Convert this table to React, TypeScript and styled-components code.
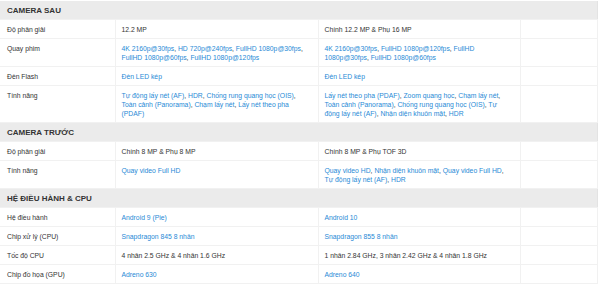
import React from 'react';
import styled, { createGlobalStyle } from 'styled-components';

const GlobalStyle = createGlobalStyle`
    html, body {
        margin: 0;
        padding: 0;
        background: #fff;
    }
    body {
        font-family: "Liberation Sans", Arial, sans-serif;
    }
`;

type Cell = { text: string; link?: boolean }[];
type Row = { label: string; a: Cell; b: Cell };
type Section = { title: string; rows: Row[] };

const plain = (t: string): Cell => [{ text: t }];
const links = (...items: string[]): Cell => items.map((t) => ({ text: t, link: true }));

const sections: Section[] = [
    {
        title: 'CAMERA SAU',
        rows: [
            { label: 'Độ phân giải', a: plain('12.2 MP'), b: plain('Chính 12.2 MP & Phụ 16 MP') },
            {
                label: 'Quay phim',
                a: links('4K 2160p@30fps', 'HD 720p@240fps', 'FullHD 1080p@30fps', 'FullHD 1080p@60fps', 'FullHD 1080p@120fps'),
                b: links('4K 2160p@30fps', 'FullHD 1080p@120fps', 'FullHD 1080p@30fps', 'FullHD 1080p@60fps'),
            },
            { label: 'Đèn Flash', a: links('Đèn LED kép'), b: links('Đèn LED kép') },
            {
                label: 'Tính năng',
                a: links('Tự động lấy nét (AF)', 'HDR', 'Chống rung quang học (OIS)', 'Toàn cảnh (Panorama)', 'Chạm lấy nét', 'Lấy nét theo pha (PDAF)'),
                b: links('Lấy nét theo pha (PDAF)', 'Zoom quang học', 'Chạm lấy nét', 'Toàn cảnh (Panorama)', 'Chống rung quang học (OIS)', 'Tự động lấy nét (AF)', 'Nhận diện khuôn mặt', 'HDR'),
            },
        ],
    },
    {
        title: 'CAMERA TRƯỚC',
        rows: [
            { label: 'Độ phân giải', a: plain('Chính 8 MP & Phụ 8 MP'), b: plain('Chính 8 MP & Phụ TOF 3D') },
            {
                label: 'Tính năng',
                a: links('Quay video Full HD'),
                b: links('Quay video HD', 'Nhận diện khuôn mặt', 'Quay video Full HD', 'Tự động lấy nét (AF)', 'HDR'),
            },
        ],
    },
    {
        title: 'HỆ ĐIỀU HÀNH & CPU',
        rows: [
            { label: 'Hệ điều hành', a: links('Android 9 (Pie)'), b: links('Android 10') },
            { label: 'Chip xử lý (CPU)', a: links('Snapdragon 845 8 nhân'), b: links('Snapdragon 855 8 nhân') },
            { label: 'Tốc độ CPU', a: plain('4 nhân 2.5 GHz & 4 nhân 1.6 GHz'), b: plain('1 nhân 2.84 GHz, 3 nhân 2.42 GHz & 4 nhân 1.8 GHz') },
            { label: 'Chip đồ họa (GPU)', a: links('Adreno 630'), b: links('Adreno 640') },
        ],
    },
];

const Value = ({ cell }: { cell: Cell }) => (
    <>
        {cell.map((item, i) => (
            <React.Fragment key={i}>
                {item.link ? <SpecLink>{item.text}</SpecLink> : item.text}
                {i < cell.length - 1 && ', '}
            </React.Fragment>
        ))}
    </>
);

export default function App() {
    return (
        <>
            <GlobalStyle />
            <Wrapper>
                <SpecTable>
                    <colgroup>
                        <col style={{ width: 115 }} />
                        <col style={{ width: 203 }} />
                        <col style={{ width: 202 }} />
                        <col />
                    </colgroup>
                    {sections.map((section) => (
                        <tbody key={section.title}>
                            <tr>
                                <SectionTitle colSpan={4}>{section.title}</SectionTitle>
                            </tr>
                            {section.rows.map((row, i) => (
                                <tr key={i}>
                                    <LabelCell>{row.label}</LabelCell>
                                    <ValueCell><Value cell={row.a} /></ValueCell>
                                    <ValueCell><Value cell={row.b} /></ValueCell>
                                    <ValueCell />
                                </tr>
                            ))}
                        </tbody>
                    ))}
                </SpecTable>
            </Wrapper>
        </>
    );
}

const Wrapper = styled.div`
    padding-top: 1px;
    width: 598px;
`;

const SpecTable = styled.table`
    width: 598px;
    border-collapse: collapse;
    table-layout: fixed;
    border-right: 1px solid #e3e3e3;
    font-size: 6.8px;
    line-height: 9px;
    color: #333;
`;

const SectionTitle = styled.th`
    background: #ebebeb;
    text-align: left;
    font-size: 8px;
    font-weight: bold;
    color: #333;
    height: 18px;
    padding: 0 7px;
    border-bottom: 1px solid #f1f1f1;
`;

const LabelCell = styled.td`
    vertical-align: top;
    padding: 5px 6px 4px 7px;
    border-bottom: 1px solid #f1f1f1;
    border-right: 1px solid #f1f1f1;
`;

const ValueCell = styled.td`
    vertical-align: top;
    padding: 5px 6px 4px 6px;
    border-bottom: 1px solid #f1f1f1;
    border-right: 1px solid #f1f1f1;
`;

const SpecLink = styled.a`
    color: #288ad6;
    text-decoration: none;
`;
